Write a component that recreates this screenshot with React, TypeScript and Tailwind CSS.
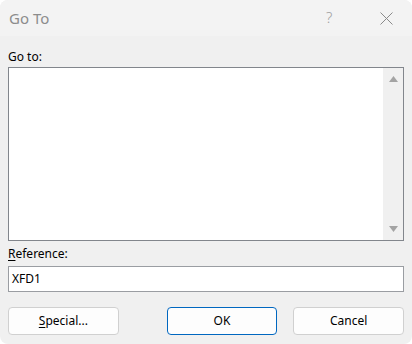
import React from "react";

export default function App() {
  const font = { fontFamily: '"Noto Sans", "Open Sans", sans-serif' };
  return (
    <div className="w-[412px] h-[344px] bg-white">
      <div
        className="w-[412px] h-[344px] bg-[#f0f0f0] rounded-lg overflow-hidden flex flex-col"
        style={font}
      >
        <div className="h-[36px] bg-[#f3f3f3] flex items-center pl-[9px] relative shrink-0">
          <span className="text-[15px] text-[#8c8c8c] leading-none">Go To</span>
          <span className="absolute left-[326px] top-[10px] text-[15px] text-[#a0a0a0] leading-none font-light">?</span>
          <svg className="absolute left-[380px] top-[12px]" width="13" height="13" viewBox="0 0 13 13">
            <path d="M0.5 0.5 L12.5 12.5 M12.5 0.5 L0.5 12.5" stroke="#8a8a8a" strokeWidth="1" />
          </svg>
        </div>
        <div className="px-2 flex flex-col">
          <div className="h-[31px] flex items-center pt-[10px] text-[12px] text-black leading-none">Go to:</div>
          <div className="h-[174px] border border-[#82868c] bg-white flex">
            <div className="flex-1"></div>
            <div className="w-[20px] bg-[#f0f0f0] flex flex-col items-center justify-between py-[8px]">
              <svg width="9" height="6" viewBox="0 0 9 6">
                <path d="M4.5 0 L9 6 L0 6 Z" fill="#a3a3a3" />
              </svg>
              <svg width="9" height="6" viewBox="0 0 9 6">
                <path d="M0 0 L9 0 L4.5 6 Z" fill="#a3a3a3" />
              </svg>
            </div>
          </div>
          <div className="h-[25px] flex items-center text-[12px] text-black leading-none pt-[1px]">
            <span className="underline underline-offset-2">R</span>eference:
          </div>
          <div className="h-[26px] border border-[#9a9da2] bg-white flex items-center px-[3px] text-[12px] text-black leading-none">
            XFD1
          </div>
          <div className="flex mt-[15px] text-[12px] text-black">
            <button className="w-[111px] h-[28px] border border-[#d0d0d0] rounded-[4px] bg-[#fdfdfd] flex items-center justify-center">
              <span><span className="underline underline-offset-2">S</span>pecial...</span>
            </button>
            <button className="ml-[48px] w-[111px] h-[28px] border border-[#0067c0] rounded-[4px] bg-[#fdfdfd] flex items-center justify-center">
              OK
            </button>
            <button className="ml-[16px] w-[111px] h-[28px] border border-[#d0d0d0] rounded-[4px] bg-[#fdfdfd] flex items-center justify-center">
              Cancel
            </button>
          </div>
        </div>
      </div>
    </div>
  );
}
